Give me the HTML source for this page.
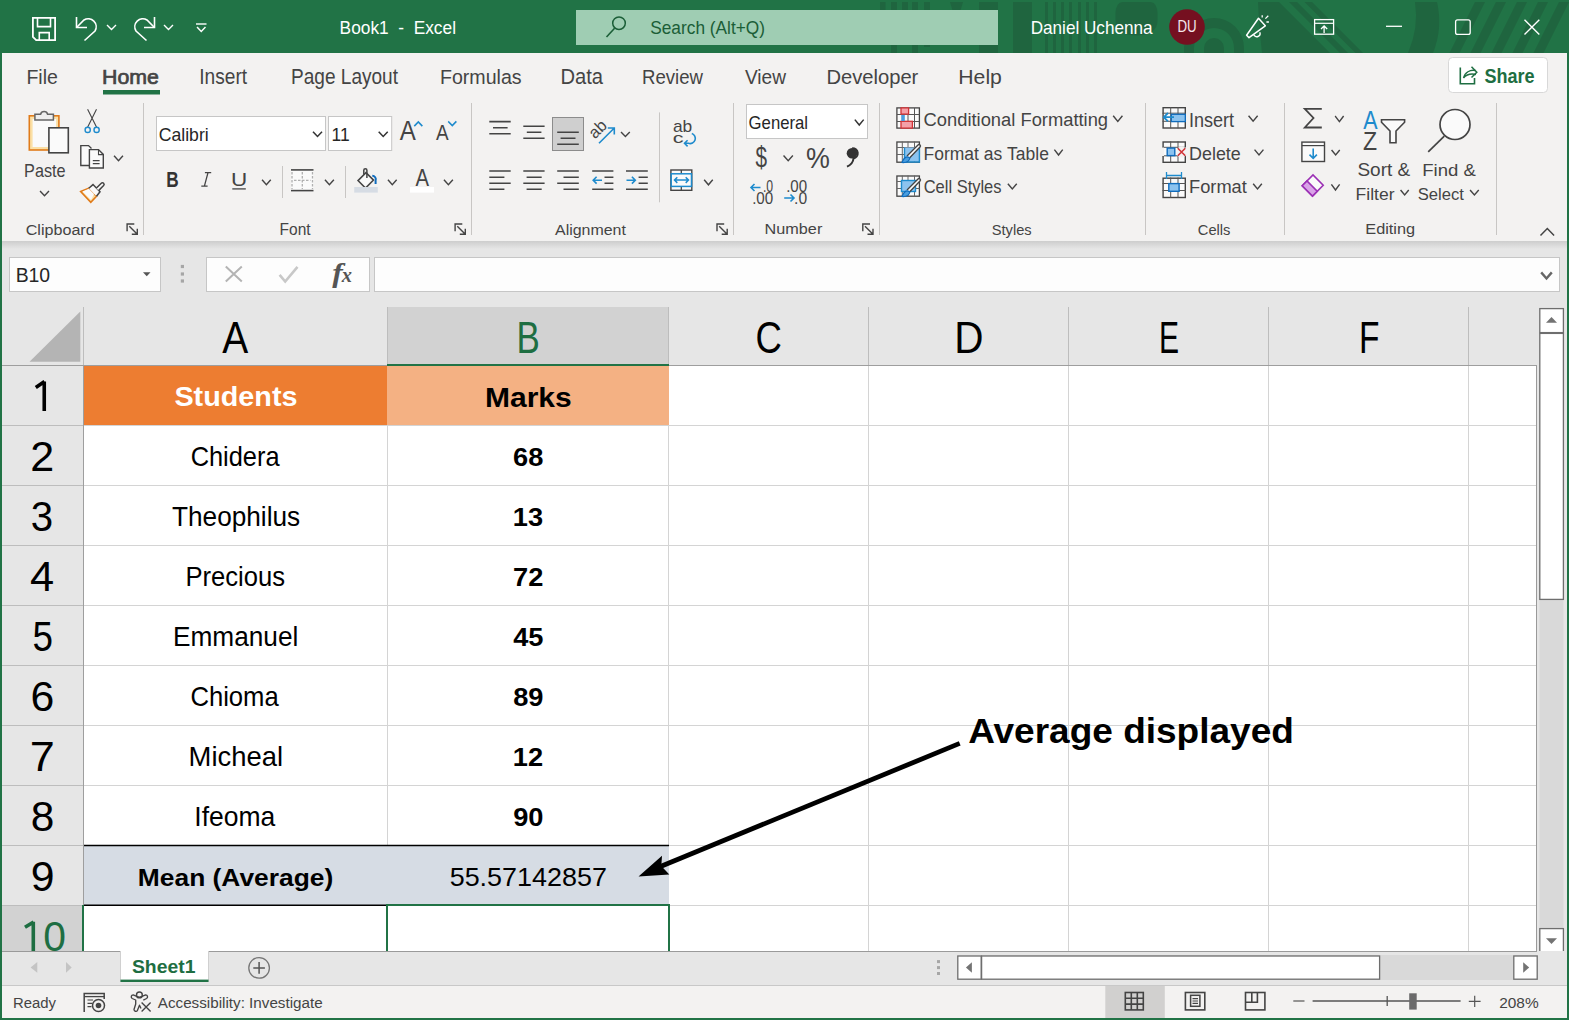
<!DOCTYPE html>
<html><head><meta charset="utf-8"><title>Book1 - Excel</title>
<style>*{margin:0;padding:0}html,body{width:1569px;height:1020px;overflow:hidden;background:#217346}svg{display:block}</style>
</head><body><svg width="1569" height="1020" viewBox="0 0 1569 1020" font-family="'Liberation Sans', sans-serif">
<rect x="0" y="0" width="1569" height="1020" fill="#217346" />
<g fill="#1f653f">
<rect x="880" y="2" width="5.5" height="10"/>
<rect x="891" y="2" width="6" height="51"/>
<rect x="902" y="2" width="6" height="10"/>
<rect x="912" y="2" width="6" height="51"/>
<rect x="924" y="2" width="6" height="45"/>
<rect x="979" y="2" width="19" height="51"/>
<rect x="1013" y="2" width="19" height="51"/>
<path d="M950 2H963L960 12H953Z"/>
<rect x="1045" y="2" width="3" height="51"/>
<rect x="1053" y="2" width="3" height="51"/>
<rect x="1061" y="2" width="3" height="51"/>
<rect x="1069" y="2" width="3" height="51"/>
<rect x="1078" y="2" width="3" height="51"/>
<rect x="1086" y="2" width="3" height="51"/>
<rect x="1094" y="2" width="3" height="51"/>
<path d="M1122 2H1151Q1157 3 1157.5 13V20Q1157.5 35.5 1136.5 35.5Q1115.5 35.5 1115.5 20V13Q1116 3 1122 2Z"/>
<path fill-rule="evenodd" d="M1184 48A30 30 0 0 1 1244 48L1244 53H1234V48A20 20 0 0 0 1194 48V53H1184Z"/>
<path d="M1204 53V48A10 10 0 0 1 1224 48V53Z"/>
<path d="M1258 2H1279L1330 53H1262Q1259 25 1258 2Z"/>
<path d="M1289 2H1297L1348 53H1340Z"/><path d="M1304.5 2H1312L1363 53H1355.5Z"/>
<path d="M1415 2H1437Q1443 28 1433 53H1408Q1419 28 1415 2Z"/>
<path d="M1475 2H1485L1459.5 53H1449.5Z"/>
<path d="M1496 2H1506L1480.5 53H1470.5Z"/>
<path d="M1517 2H1527L1501.5 53H1491.5Z"/>
<path d="M1538 2H1548L1522.5 53H1512.5Z"/>
<path d="M1559 2H1569L1543.5 53H1533.5Z"/>
</g>
<path d="M32.9 17.9H55.1V40.1H36.2L32.9 36.8Z" stroke="#ffffff" fill="none" stroke-width="1.8" />
<path d="M37.5 18V26.6H50.5V18" stroke="#ffffff" fill="none" stroke-width="1.6" />
<path d="M39.3 40V32.6H49.2V40" stroke="#ffffff" fill="none" stroke-width="1.6" />
<path d="M76.5 17V27.5H87" stroke="#ffffff" fill="none" stroke-width="1.6" />
<path d="M76.8 27.2L84 20A8 8 0 0 1 95 31L84.5 40.5" stroke="#ffffff" fill="none" stroke-width="1.6" />
<path d="M107.5 25.5L111.5 29.5L115.5 25.5" stroke="#ffffff" fill="none" stroke-width="1.4" stroke-linecap="square"/>
<path d="M154.5 17V27.5H144" stroke="#ffffff" fill="none" stroke-width="1.6" />
<path d="M154.2 27.2L147 20A8 8 0 0 0 136 31L146.5 40.5" stroke="#ffffff" fill="none" stroke-width="1.6" />
<path d="M164.5 25.5L168.5 29.5L172.5 25.5" stroke="#ffffff" fill="none" stroke-width="1.4" stroke-linecap="square"/>
<line x1="196" y1="24" x2="206.5" y2="24" stroke="#ffffff" stroke-width="1.4" />
<path d="M197.5 27.5L201.25 31.5L205 27.5" stroke="#ffffff" fill="none" stroke-width="1.4" stroke-linecap="square"/>
<text transform="translate(339.61 33.80) scale(0.9662 1)" font-family='"Liberation Sans"' font-size="17.93" font-weight="normal" font-style="normal" fill="#ffffff" >Book1&#160;&#160;-&#160;&#160;Excel</text>
<rect x="576" y="10" width="422" height="35" fill="#9fcdb3" />
<circle cx="619" cy="23.2" r="6.3" fill="none" stroke="#1b5e37" stroke-width="1.5"/>
<line x1="606.5" y1="37" x2="614.6" y2="28.2" stroke="#1b5e37" stroke-width="1.6" />
<text transform="translate(650.22 33.80) scale(0.9794 1)" font-family='"Liberation Sans"' font-size="17.66" font-weight="normal" font-style="normal" fill="#1b5e37" >Search&#160;(Alt+Q)</text>
<text transform="translate(1030.63 34.00) scale(0.9786 1)" font-family='"Liberation Sans"' font-size="17.52" font-weight="normal" font-style="normal" fill="#ffffff" >Daniel&#160;Uchenna</text>
<circle cx="1187" cy="27" r="17.8" fill="#751020"/>
<text transform="translate(1177.44 32.30) scale(0.7984 1)" font-family='"Liberation Sans"' font-size="16.67" font-weight="normal" font-style="normal" fill="#f4e6ea" >DU</text>
<path d="M1258.5 18.3L1246.6 35.3L1249 37.6L1265.3 25.8Z" stroke="#ffffff" fill="none" stroke-width="1.5" stroke-linejoin="round"/>
<path d="M1253.6 34.6A3.3 3.3 0 0 0 1259.8 32.2" stroke="#ffffff" fill="none" stroke-width="1.4" />
<path d="M1262.2 15.2V17.6M1265.4 18.6L1268.3 15.8M1266.4 22H1268.9" stroke="#ffffff" fill="none" stroke-width="1.3" />
<rect x="1314.6" y="19.6" width="19" height="14.6" fill="none" stroke="#fff" stroke-width="1.3"/>
<line x1="1314.6" y1="23.3" x2="1333.6" y2="23.3" stroke="#ffffff" stroke-width="1.2" />
<path d="M1324.1 33V26.2M1321 29L1324.1 26L1327.2 29" stroke="#ffffff" fill="none" stroke-width="1.3" />
<line x1="1386" y1="26.3" x2="1402" y2="26.3" stroke="#ffffff" stroke-width="1.3" />
<rect x="1455.6" y="19.8" width="14.6" height="14.6" rx="2" fill="none" stroke="#fff" stroke-width="1.3"/>
<path d="M1524.5 19.8L1539.3 34.6M1539.3 19.8L1524.5 34.6" stroke="#ffffff" fill="none" stroke-width="1.4" />
<rect x="2" y="53" width="1565" height="188" fill="#f3f2f1" />
<text transform="translate(26.44 84.30) scale(0.9631 1)" font-family='"Liberation Sans"' font-size="20.28" font-weight="normal" font-style="normal" fill="#444" >File</text>
<text transform="translate(199.28 84.30) scale(0.8978 1)" font-family='"Liberation Sans"' font-size="21.30" font-weight="normal" font-style="normal" fill="#444" >Insert</text>
<text transform="translate(290.97 84.30) scale(0.8955 1)" font-family='"Liberation Sans"' font-size="21.30" font-weight="normal" font-style="normal" fill="#444" >Page&#160;Layout</text>
<text transform="translate(439.93 84.30) scale(0.9669 1)" font-family='"Liberation Sans"' font-size="20.28" font-weight="normal" font-style="normal" fill="#444" >Formulas</text>
<text transform="translate(560.38 84.30) scale(0.9480 1)" font-family='"Liberation Sans"' font-size="21.30" font-weight="normal" font-style="normal" fill="#444" >Data</text>
<text transform="translate(642.01 84.30) scale(0.9170 1)" font-family='"Liberation Sans"' font-size="20.28" font-weight="normal" font-style="normal" fill="#444" >Review</text>
<text transform="translate(744.90 84.30) scale(0.9427 1)" font-family='"Liberation Sans"' font-size="20.28" font-weight="normal" font-style="normal" fill="#444" >View</text>
<text transform="translate(826.39 84.30) scale(0.9952 1)" font-family='"Liberation Sans"' font-size="20.28" font-weight="normal" font-style="normal" fill="#444" >Developer</text>
<text transform="translate(958.30 84.30) scale(1.0450 1)" font-family='"Liberation Sans"' font-size="20.28" font-weight="normal" font-style="normal" fill="#444" >Help</text>
<text transform="translate(102.09 84.10) scale(1.0369 1)" font-family='"Liberation Sans"' font-size="20.58" font-weight="normal" font-style="normal" fill="#444" stroke="#444" stroke-width="0.7">Home</text>
<rect x="103" y="90" width="57" height="4.5" fill="#217346" />
<rect x="1448.5" y="57.5" width="99" height="35" rx="4" fill="#fff" stroke="#d8d8d8"/>
<text transform="translate(1484.46 83.30) scale(0.8841 1)" font-family='"Liberation Sans"' font-size="20.41" font-weight="bold" font-style="normal" fill="#1e6e42" >Share</text>
<path d="M1460.3 67.5V83.8H1474.5V78" stroke="#1e6e42" fill="none" stroke-width="1.6" />
<path d="M1463.5 78A10 10 0 0 1 1475.5 70.5M1463.5 78A11 8 0 0 1 1476 74.5" stroke="#1e6e42" fill="none" stroke-width="1.4" />
<path d="M1471.5 66.8L1476.8 72.3L1471.5 77.5" stroke="#1e6e42" fill="none" stroke-width="1.5" />
<line x1="143.5" y1="103" x2="143.5" y2="235" stroke="#c8c6c4" stroke-width="1" />
<line x1="471.5" y1="103" x2="471.5" y2="235" stroke="#c8c6c4" stroke-width="1" />
<line x1="733.5" y1="103" x2="733.5" y2="235" stroke="#c8c6c4" stroke-width="1" />
<line x1="879.5" y1="103" x2="879.5" y2="235" stroke="#c8c6c4" stroke-width="1" />
<line x1="1145.5" y1="103" x2="1145.5" y2="235" stroke="#c8c6c4" stroke-width="1" />
<line x1="1284.5" y1="103" x2="1284.5" y2="235" stroke="#c8c6c4" stroke-width="1" />
<line x1="1496.5" y1="103" x2="1496.5" y2="235" stroke="#c8c6c4" stroke-width="1" />
<rect x="29.3" y="115.8" width="29.6" height="34.2" fill="#fbe0a6" stroke="#e07b1a" stroke-width="1.6"/>
<rect x="32.6" y="119" width="23.5" height="28" fill="#fafafa" />
<path d="M34.9 120V114.3H40.6A3.6 3.6 0 0 1 47.6 114.3H53.4V120Z" stroke="#666" fill="#eeeeee" stroke-width="1.5" />
<rect x="48.9" y="127.8" width="19.4" height="25" fill="#fafafa" stroke="#444" stroke-width="1.6"/>
<text transform="translate(24.10 176.60) scale(0.9045 1)" font-family='"Liberation Sans"' font-size="17.97" font-weight="normal" font-style="normal" fill="#444" >Paste</text>
<path d="M40.5 191.5L44.5 195.8L48.5 191.5" stroke="#444" fill="none" stroke-width="1.4" stroke-linecap="square"/>
<path d="M87.6 109.3L96.6 127.3M96.5 109.3L87.6 127.3" stroke="#444" fill="none" stroke-width="1.1" />
<circle cx="87.7" cy="129.9" r="2.6" fill="none" stroke="#1e8bcd" stroke-width="1.4"/><circle cx="96.6" cy="129.9" r="2.6" fill="none" stroke="#1e8bcd" stroke-width="1.4"/>
<path d="M89.5 165.5H80.8V145.6H88.5L91.5 148.6" stroke="#444" fill="#fafafa" stroke-width="1.4" />
<path d="M89.4 168V149.6H98.5L103.3 154.4V168Z" stroke="#444" fill="#fafafa" stroke-width="1.4" />
<path d="M92.8 160.6H99.6M92.8 163.6H99.6" stroke="#444" fill="none" stroke-width="1.1" />
<path d="M98.5 149.8V154.6H103.3" stroke="#444" fill="none" stroke-width="1.1" />
<path d="M114.5 156.2L118.5 160.8L122.5 156.2" stroke="#444" fill="none" stroke-width="1.4" stroke-linecap="square"/>
<path d="M80.7 191.5L88.8 188.3L96.5 196.3L90.8 202.3Z" stroke="#e07b1a" fill="#fbe0a6" stroke-width="1.6" />
<path d="M82.5 191.5L88.8 188.7L94 194L91 200Z" stroke="none" fill="#fafafa" stroke-width="1" />
<path d="M88.8 188.3L93 184.6L100 191.8L96.5 196.3" stroke="#444" fill="#fafafa" stroke-width="1.5" />
<path d="M96.2 188.3L101.3 183.2A1.6 1.6 0 0 1 103.6 185.5L98.6 190.6" stroke="#444" fill="#fafafa" stroke-width="1.5" />
<text transform="translate(25.69 234.50) scale(1.1357 1)" font-family='"Liberation Sans"' font-size="14.21" font-weight="normal" font-style="normal" fill="#444" >Clipboard</text>
<path d="M127.1 231.2V224.0H134.3" stroke="#444" fill="none" stroke-width="1.4" />
<path d="M129.3 226.2L137.3 234.2M131.8 234.2H137.3V228.7" stroke="#444" fill="none" stroke-width="1.4" />
<rect x="156.5" y="116.5" width="169" height="34" fill="#fff" stroke="#c6c6c6"/>
<text transform="translate(158.72 141.00) scale(0.9690 1)" font-family='"Liberation Sans"' font-size="18.21" font-weight="normal" font-style="normal" fill="#262626" >Calibri</text>
<path d="M313.5 132.3L317.5 136.5L321.5 132.3" stroke="#333" fill="none" stroke-width="1.5" stroke-linecap="square"/>
<rect x="328.5" y="116.5" width="63.2" height="34" fill="#fff" stroke="#c6c6c6"/>
<text transform="translate(331.49 141.00) scale(0.9426 1)" font-family='"Liberation Sans"' font-size="18.55" font-weight="normal" font-style="normal" fill="#262626" >11</text>
<path d="M379.2 132.3L383.2 136.5L387.2 132.3" stroke="#333" fill="none" stroke-width="1.5" stroke-linecap="square"/>
<text transform="translate(399.70 139.50) scale(0.8514 1)" font-family='"Liberation Sans"' font-size="28.26" font-weight="normal" font-style="normal" fill="#444" >A</text>
<path d="M414.8 125.6L418.3 122L421.8 125.6" stroke="#1e8bcd" fill="none" stroke-width="1.6" stroke-linecap="square"/>
<text transform="translate(436.00 139.50) scale(0.8658 1)" font-family='"Liberation Sans"' font-size="21.88" font-weight="normal" font-style="normal" fill="#444" >A</text>
<path d="M448.8 122L452.3 125.6L455.8 122" stroke="#1e8bcd" fill="none" stroke-width="1.6" stroke-linecap="square"/>
<text transform="translate(166.28 186.80) scale(0.8025 1)" font-family='"Liberation Sans"' font-size="21.45" font-weight="bold" font-style="normal" fill="#333" >B</text>
<path d="M204.9 172.7H211.2M201.3 186.2H207.6M208 172.7L204.4 186.2" stroke="#444" fill="none" stroke-width="1.3" />
<text transform="translate(230.92 185.60) scale(1.1650 1)" font-family='"Liberation Sans"' font-size="19.28" font-weight="normal" font-style="normal" fill="#444" >U</text>
<line x1="232.3" y1="188.9" x2="245.8" y2="188.9" stroke="#444" stroke-width="1.3" />
<path d="M262.5 180.3L266.4 184.8L270.3 180.3" stroke="#444" fill="none" stroke-width="1.4" stroke-linecap="square"/>
<line x1="282.5" y1="166" x2="282.5" y2="198" stroke="#c8c6c4" stroke-width="1" />
<rect x="291" y="169" width="22.5" height="22.5" fill="#fafafa" />
<line x1="291" y1="169.9" x2="313.5" y2="169.9" stroke="#444" stroke-width="1.6" />
<line x1="291" y1="190.6" x2="313.5" y2="190.6" stroke="#444" stroke-width="1.6" />
<path d="M292 172V189M302.3 172V189M312.5 172V189M294 180.3H310.5" stroke="#b0b0b0" fill="none" stroke-width="1.3" stroke-dasharray="2.5 1.5"/>
<path d="M325.4 180.3L329.4 184.8L333.4 180.3" stroke="#444" fill="none" stroke-width="1.4" stroke-linecap="square"/>
<line x1="345.5" y1="166" x2="345.5" y2="198" stroke="#c8c6c4" stroke-width="1" />
<path d="M358 180.6L366 172.6L373.5 180.1L365.5 188.1Z" stroke="#444" fill="#fafafa" stroke-width="1.5" />
<path d="M363.8 174.8V170.3A1.5 1.5 0 0 1 366.9 170.3V178" stroke="#444" fill="none" stroke-width="1.5" />
<path d="M372.3 175.8A3.5 3.5 0 0 1 375.6 180.5V184" stroke="#0f6cbd" fill="none" stroke-width="2" />
<rect x="354.2" y="187" width="23.6" height="5.6" fill="#d6dce4" />
<path d="M388.4 180.3L392.29999999999995 184.8L396.2 180.3" stroke="#444" fill="none" stroke-width="1.4" stroke-linecap="square"/>
<text transform="translate(415.40 185.60) scale(0.8338 1)" font-family='"Liberation Sans"' font-size="24.35" font-weight="normal" font-style="normal" fill="#444" >A</text>
<rect x="410" y="187" width="24" height="5.6" fill="#ffffff" />
<path d="M444.4 180.3L448.4 184.8L452.4 180.3" stroke="#444" fill="none" stroke-width="1.4" stroke-linecap="square"/>
<text transform="translate(279.56 235.00) scale(0.9728 1)" font-family='"Liberation Sans"' font-size="15.94" font-weight="normal" font-style="normal" fill="#444" >Font</text>
<path d="M455.1 231.2V224.0H462.3" stroke="#444" fill="none" stroke-width="1.4" />
<path d="M457.3 226.2L465.3 234.2M459.8 234.2H465.3V228.7" stroke="#444" fill="none" stroke-width="1.4" />
<path d="M489.3 121.6H510.7M493 127.7H507.6M489.3 133.7H510.7" stroke="#444" fill="none" stroke-width="1.6" />
<path d="M523.3 126.2H544.6M526.8 132.2H541.4M523.3 138.3H544.6" stroke="#444" fill="none" stroke-width="1.6" />
<rect x="552.5" y="117.5" width="31" height="33" fill="#cfcfcf" stroke="#8c8c8c"/>
<path d="M557.2 132.2H578.8M560.6 138.3H575.5M557.2 144.2H578.8" stroke="#444" fill="none" stroke-width="1.6" />
<path d="M489.3 171H510.7M489.3 177.3H504.4M489.3 183.2H510.7M489.3 189.3H504.4" stroke="#444" fill="none" stroke-width="1.6" />
<path d="M523.3 171H544.6M526.6 177.3H541.7M523.3 183.2H544.6M526.6 189.3H541.7" stroke="#444" fill="none" stroke-width="1.6" />
<path d="M557.2 171H578.8M563.5 177.3H578.8M557.2 183.2H578.8M563.5 189.3H578.8" stroke="#444" fill="none" stroke-width="1.6" />
<path d="M592.2 171H613.4M604.5 177.3H613.4M604.5 183.2H613.4M592.2 189.3H613.4" stroke="#444" fill="none" stroke-width="1.6" />
<path d="M626 171H647.8M638.6 177.3H647.8M638.6 183.2H647.8M626 189.3H647.8" stroke="#444" fill="none" stroke-width="1.6" />
<path d="M602 180.2H593.2M596.6 176.8L593.2 180.2L596.6 183.6" stroke="#1e8bcd" fill="none" stroke-width="1.6" />
<path d="M626.5 180.2H635.3M631.9 176.8L635.3 180.2L631.9 183.6" stroke="#1e8bcd" fill="none" stroke-width="1.6" />
<text transform="translate(595 139.5) rotate(-45)" font-family="'Liberation Sans'" font-size="16.5" fill="#444">ab</text>
<path d="M599 143.3L614.3 128M607.8 128H614.3V134.5" stroke="#1e8bcd" fill="none" stroke-width="1.6" />
<path d="M621.5 132.5L625.4 136.5L629.3 132.5" stroke="#444" fill="none" stroke-width="1.4" stroke-linecap="square"/>
<line x1="659.5" y1="112.4" x2="659.5" y2="202.3" stroke="#c8c6c4" stroke-width="1" />
<text transform="translate(672.90 132.30) scale(1.1052 1)" font-family='"Liberation Sans"' font-size="15.72" font-weight="normal" font-style="normal" fill="#444" >ab</text>
<text transform="translate(672.74 143.00) scale(1.4586 1)" font-family='"Liberation Sans"' font-size="14.81" font-weight="normal" font-style="normal" fill="#444" >c</text>
<path d="M691.8 133.5A4.5 4.5 0 0 1 688.5 143.3H684.5M687.6 140.2L684.5 143.3L687.6 146.4" stroke="#1e8bcd" fill="none" stroke-width="1.6" />
<rect x="670.9" y="170" width="20.9" height="20.3" fill="#fafafa" stroke="#444" stroke-width="1.4"/>
<line x1="681.3" y1="170" x2="681.3" y2="190.3" stroke="#444" stroke-width="1.3" />
<rect x="671.2" y="173.8" width="20.3" height="12.6" fill="#fafafa" stroke="#1e8bcd" stroke-width="1.5"/>
<path d="M674.5 180.1H688.5M677.3 177.3L674.5 180.1L677.3 182.9M685.7 177.3L688.5 180.1L685.7 182.9" stroke="#1e8bcd" fill="none" stroke-width="1.5" />
<path d="M704.6 180.3L708.45 184.8L712.3 180.3" stroke="#444" fill="none" stroke-width="1.4" stroke-linecap="square"/>
<text transform="translate(555.00 234.70) scale(1.0322 1)" font-family='"Liberation Sans"' font-size="15.45" font-weight="normal" font-style="normal" fill="#444" >Alignment</text>
<path d="M717.0 231.2V224.0H724.2" stroke="#444" fill="none" stroke-width="1.4" />
<path d="M719.2 226.2L727.2 234.2M721.7 234.2H727.2V228.7" stroke="#444" fill="none" stroke-width="1.4" />
<rect x="746.5" y="104.5" width="121" height="34" fill="#fff" stroke="#c6c6c6"/>
<text transform="translate(748.56 129.10) scale(0.9127 1)" font-family='"Liberation Sans"' font-size="18.34" font-weight="normal" font-style="normal" fill="#262626" >General</text>
<path d="M855.3 120.2L859.25 125L863.2 120.2" stroke="#333" fill="none" stroke-width="1.5" stroke-linecap="square"/>
<text transform="translate(755.39 166.59) scale(0.7215 1)" font-family='"Liberation Sans"' font-size="28.77" font-weight="normal" font-style="normal" fill="#444" >$</text>
<path d="M784 156L788.2 160.6L792.4 156" stroke="#444" fill="none" stroke-width="1.4" stroke-linecap="square"/>
<text transform="translate(806.06 167.50) scale(0.8965 1)" font-family='"Liberation Sans"' font-size="29.93" font-weight="normal" font-style="normal" fill="#444" >%</text>
<path d="M852.2 148.2A5.2 5.2 0 0 1 853.5 158.5Q853 164 847 166.6" stroke="#333" fill="none" stroke-width="2" />
<circle cx="852" cy="153.2" r="5.3" fill="#333"/>
<text transform="translate(762.90 192.00) scale(0.7798 1)" font-family='"Liberation Sans"' font-size="15.71" font-weight="normal" font-style="normal" fill="#444" >.0</text>
<text transform="translate(752.13 203.60) scale(0.9572 1)" font-family='"Liberation Sans"' font-size="15.86" font-weight="normal" font-style="normal" fill="#444" >.00</text>
<path d="M760.5 187.5H751M754.5 184L751 187.5L754.5 191" stroke="#1e8bcd" fill="none" stroke-width="1.6" />
<text transform="translate(786.14 192.00) scale(0.9608 1)" font-family='"Liberation Sans"' font-size="15.71" font-weight="normal" font-style="normal" fill="#444" >.00</text>
<text transform="translate(794.09 203.60) scale(0.9859 1)" font-family='"Liberation Sans"' font-size="15.86" font-weight="normal" font-style="normal" fill="#444" >.0</text>
<path d="M784.2 198H794M790.5 194.5L794 198L790.5 201.5" stroke="#1e8bcd" fill="none" stroke-width="1.6" />
<text transform="translate(764.60 234.20) scale(1.1776 1)" font-family='"Liberation Sans"' font-size="13.79" font-weight="normal" font-style="normal" fill="#444" >Number</text>
<path d="M862.8 231.2V224.0H870" stroke="#444" fill="none" stroke-width="1.4" />
<path d="M865 226.2L873 234.2M867.5 234.2H873V228.7" stroke="#444" fill="none" stroke-width="1.4" />
<rect x="896.9" y="107.9" width="22.5" height="20.2" fill="#fafafa" stroke="#444" stroke-width="1.3"/>
<path d="M902.3 108V128M908 108V128M914.5 108V128M897 114.5H919.4M897 121.5H919.4" stroke="#555" fill="none" stroke-width="1" />
<rect x="901" y="107.9" width="7.6" height="6.2" fill="#f4a0a8" stroke="#d13438" stroke-width="1.3"/>
<rect x="901" y="121.3" width="11.4" height="6.8" fill="#f4a0a8" stroke="#d13438" stroke-width="1.3"/>
<rect x="901.3" y="115" width="3.5" height="6" fill="#4a9fe0" />
<text transform="translate(923.58 125.90) scale(1.0079 1)" font-family='"Liberation Sans"' font-size="18.21" font-weight="normal" font-style="normal" fill="#444" >Conditional&#160;Formatting</text>
<path d="M1113.6 116.3L1117.8 121.5L1122 116.3" stroke="#444" fill="none" stroke-width="1.4" stroke-linecap="square"/>
<rect x="896.9" y="142.0" width="22.5" height="20.2" fill="#fafafa" stroke="#444" stroke-width="1.3"/>
<path d="M902.3 141.5V162.5M908 141.5V162.5M914.5 141.5V162.5M897 147.5H919.4M897 154.5H919.4" stroke="#666" fill="none" stroke-width="1" />
<rect x="904" y="147.5" width="15" height="14" fill="#8cc3ef" stroke="#1e8bcd" stroke-width="0"/>
<path d="M904.5 147.5V162.0H919.4V147.5" stroke="#1e8bcd" fill="none" stroke-width="1.4" />
<path d="M907 156.0L918 145.0A1.4 1.4 0 0 1 920 147.0L909.5 158.0" stroke="#444" fill="#fafafa" stroke-width="1.4" />
<path d="M902 162.5Q905 154.5 909.8 158.0Q909 163.0 902 162.5Z" stroke="#0f6cbd" fill="#4a9fe0" stroke-width="1.2" />
<text transform="translate(923.60 159.50) scale(0.9601 1)" font-family='"Liberation Sans"' font-size="18.21" font-weight="normal" font-style="normal" fill="#444" >Format&#160;as&#160;Table</text>
<path d="M1054.8 150.2L1058.55 155L1062.3 150.2" stroke="#444" fill="none" stroke-width="1.4" stroke-linecap="square"/>
<rect x="896.9" y="176.0" width="22.5" height="20.2" fill="#fafafa" stroke="#444" stroke-width="1.3"/>
<path d="M902.3 175.5V196.5M908 175.5V196.5M914.5 175.5V196.5M897 181.5H919.4M897 188.5H919.4" stroke="#666" fill="none" stroke-width="1" />
<rect x="901.5" y="180.5" width="14" height="11" fill="#8cc3ef" stroke="#1e8bcd" stroke-width="1.4"/>
<path d="M907 190.0L918 179.0A1.4 1.4 0 0 1 920 181.0L909.5 192.0" stroke="#444" fill="#fafafa" stroke-width="1.4" />
<path d="M902 196.5Q905 188.5 909.8 192.0Q909 197.0 902 196.5Z" stroke="#0f6cbd" fill="#4a9fe0" stroke-width="1.2" />
<text transform="translate(923.68 193.30) scale(0.9055 1)" font-family='"Liberation Sans"' font-size="18.21" font-weight="normal" font-style="normal" fill="#444" >Cell&#160;Styles</text>
<path d="M1008.3 184.3L1012.3 189L1016.3 184.3" stroke="#444" fill="none" stroke-width="1.4" stroke-linecap="square"/>
<text transform="translate(991.74 234.70) scale(0.9496 1)" font-family='"Liberation Sans"' font-size="15.45" font-weight="normal" font-style="normal" fill="#444" >Styles</text>
<rect x="1163.1" y="107.7" width="22.2" height="20.3" fill="#fafafa" stroke="#444" stroke-width="1.4"/>
<path d="M1170.7 107V128.3M1178 107V128.3M1162.5 113.2H1186M1162.5 121.3H1186" stroke="#555" fill="none" stroke-width="1" />
<rect x="1171.3" y="114.3" width="14" height="7.3" fill="#8cc3ef" stroke="#0f6cbd" stroke-width="1.3"/>
<path d="M1174 117.2H1163.8M1168 113L1163.8 117.2L1168 121.4" stroke="#1e8bcd" fill="none" stroke-width="1.8" />
<text transform="translate(1188.88 126.60) scale(0.9292 1)" font-family='"Liberation Sans"' font-size="19.42" font-weight="normal" font-style="normal" fill="#444" >Insert</text>
<path d="M1249 116.3L1253.1 121.2L1257.2 116.3" stroke="#444" fill="none" stroke-width="1.4" stroke-linecap="square"/>
<rect x="1163.1" y="142.0" width="22.2" height="20.3" fill="#fafafa" stroke="#444" stroke-width="1.4"/>
<path d="M1170.7 141.3V162.60000000000002M1178 141.3V162.60000000000002M1162.5 147.3H1186M1162.5 155.8H1186" stroke="#555" fill="none" stroke-width="1" />
<rect x="1162" y="147.5" width="2" height="8.5" fill="#f3f2f1" />
<rect x="1184.5" y="147.5" width="2" height="8.5" fill="#f3f2f1" />
<rect x="1167.2" y="148.1" width="7.6" height="7.5" fill="#8cc3ef" stroke="#0f6cbd" stroke-width="1.4"/>
<circle cx="1181.5" cy="152" r="5.5" fill="#f3f2f1"/>
<path d="M1177.8 148.2L1185.3 155.8M1185.3 148.2L1177.8 155.8" stroke="#d13438" fill="none" stroke-width="1.6" />
<text transform="translate(1189.07 159.50) scale(0.9833 1)" font-family='"Liberation Sans"' font-size="18.21" font-weight="normal" font-style="normal" fill="#444" >Delete</text>
<path d="M1255 150.2L1259.0 155L1263 150.2" stroke="#444" fill="none" stroke-width="1.4" stroke-linecap="square"/>
<rect x="1163.1" y="178.2" width="22.2" height="19.3" fill="#fafafa" stroke="#444" stroke-width="1.4"/>
<path d="M1170.7 177.5V197.8M1178 177.5V197.8M1162.5 183.5H1186M1162.5 190.5H1186" stroke="#555" fill="none" stroke-width="1" />
<rect x="1168.8" y="183.6" width="10.3" height="7.7" fill="#8cc3ef" stroke="#0f6cbd" stroke-width="1.4"/>
<path d="M1166.5 175.5H1181.5M1166.5 172V179M1181.5 172V179" stroke="#1e8bcd" fill="none" stroke-width="1.3" />
<text transform="translate(1189.04 193.30) scale(0.9538 1)" font-family='"Liberation Sans"' font-size="19.13" font-weight="normal" font-style="normal" fill="#444" >Format</text>
<path d="M1253.6 184.3L1257.5 189L1261.4 184.3" stroke="#444" fill="none" stroke-width="1.4" stroke-linecap="square"/>
<text transform="translate(1197.76 234.70) scale(0.9528 1)" font-family='"Liberation Sans"' font-size="15.45" font-weight="normal" font-style="normal" fill="#444" >Cells</text>
<path d="M1321.8 108.8H1304.8L1313.5 118L1304.8 127.5H1321.8" stroke="#444" fill="none" stroke-width="1.8" stroke-linejoin="miter"/>
<path d="M1335.6 116.6L1339.4 121.6L1343.2 116.6" stroke="#444" fill="none" stroke-width="1.4" stroke-linecap="square"/>
<rect x="1301.9" y="142.1" width="22.6" height="19.4" fill="#fafafa" stroke="#444" stroke-width="1.4"/>
<line x1="1301.9" y1="145.6" x2="1324.5" y2="145.6" stroke="#444" stroke-width="1.2" />
<path d="M1313.2 148.5V158.3M1309.5 154.6L1313.2 158.3L1316.9 154.6" stroke="#1e8bcd" fill="none" stroke-width="1.6" />
<path d="M1332 150.5L1335.65 155L1339.3 150.5" stroke="#444" fill="none" stroke-width="1.4" stroke-linecap="square"/>
<path d="M1302.2 185.7L1313 175L1323.2 185.3L1312.5 196Z" stroke="#9b30b5" fill="#fafafa" stroke-width="1.6" />
<path d="M1302.2 185.7L1307 180.9L1317.2 191.3L1312.5 196Z" stroke="#9b30b5" fill="#d9a3e8" stroke-width="1.6" />
<path d="M1331.8 185L1335.5 190L1339.2 185" stroke="#444" fill="none" stroke-width="1.4" stroke-linecap="square"/>
<text transform="translate(1363.30 128.50) scale(0.8336 1)" font-family='"Liberation Sans"' font-size="25.80" font-weight="normal" font-style="normal" fill="#1e8bcd" >A</text>
<text transform="translate(1363.11 149.90) scale(0.8659 1)" font-family='"Liberation Sans"' font-size="26.67" font-weight="normal" font-style="normal" fill="#444" >Z</text>
<path d="M1381.5 119.8H1404.6V122.2L1396 131V142.8H1390V131L1381.5 122.2Z" stroke="#444" fill="#fafafa" stroke-width="1.6" />
<text transform="translate(1357.44 176.00) scale(1.0643 1)" font-family='"Liberation Sans"' font-size="17.86" font-weight="normal" font-style="normal" fill="#444" >Sort&#160;&amp;</text>
<text transform="translate(1355.60 200.00) scale(1.0153 1)" font-family='"Liberation Sans"' font-size="17.24" font-weight="normal" font-style="normal" fill="#444" >Filter</text>
<path d="M1401 190.5L1404.65 195L1408.3 190.5" stroke="#444" fill="none" stroke-width="1.4" stroke-linecap="square"/>
<circle cx="1455" cy="124.5" r="15" fill="#fafafa" stroke="#444" stroke-width="1.7"/>
<line x1="1428.2" y1="151.8" x2="1444.3" y2="136.2" stroke="#444" stroke-width="1.7" />
<text transform="translate(1422.21 176.00) scale(1.0770 1)" font-family='"Liberation Sans"' font-size="17.24" font-weight="normal" font-style="normal" fill="#444" >Find&#160;&amp;</text>
<text transform="translate(1417.75 200.00) scale(0.9642 1)" font-family='"Liberation Sans"' font-size="17.24" font-weight="normal" font-style="normal" fill="#444" >Select</text>
<path d="M1470.5 190.5L1474.4 195L1478.3 190.5" stroke="#444" fill="none" stroke-width="1.4" stroke-linecap="square"/>
<text transform="translate(1365.29 234.00) scale(1.1271 1)" font-family='"Liberation Sans"' font-size="14.48" font-weight="normal" font-style="normal" fill="#444" >Editing</text>
<path d="M1540.5 235.5L1547.3 228.5L1554.1 235.5" stroke="#444" fill="none" stroke-width="1.5" />
<defs><linearGradient id="sh" x1="0" y1="0" x2="0" y2="1"><stop offset="0" stop-color="#cdcdcd"/><stop offset="1" stop-color="#e6e6e6"/></linearGradient></defs>
<rect x="2" y="241" width="1565" height="66" fill="#e6e6e6" />
<rect x="2" y="241" width="1565" height="8" fill="url(#sh)" />
<rect x="9.5" y="257.5" width="151" height="34" fill="#fdfdfd" stroke="#c6c6c6"/>
<text transform="translate(15.65 281.80) scale(0.9985 1)" font-family='"Liberation Sans"' font-size="19.43" font-weight="normal" font-style="normal" fill="#262626" >B10</text>
<path d="M143 272.3H150.5L146.75 276.3Z" stroke="none" fill="#555" stroke-width="1" />
<rect x="180.8" y="264.9" width="3.2" height="3.2" fill="#a6a6a6" />
<rect x="180.8" y="272.4" width="3.2" height="3.2" fill="#a6a6a6" />
<rect x="180.8" y="279.4" width="3.2" height="3.2" fill="#a6a6a6" />
<rect x="206.5" y="257.5" width="163" height="34" fill="#fdfdfd" stroke="#c6c6c6"/>
<path d="M225.8 266.5L241.8 281.5M241.8 266.5L225.8 281.5" stroke="#b4b4b4" fill="none" stroke-width="2" />
<path d="M279.6 274.8L285.2 281.5L297.5 266.8" stroke="#c8c8c8" fill="none" stroke-width="2.6" />
<text transform="translate(332.30 282.00) scale(1.1802 1)" font-family='"Liberation Serif"' font-size="26.95" font-weight="bold" font-style="italic" fill="#555" >f</text>
<text transform="translate(341.81 281.50) scale(0.9388 1)" font-family='"Liberation Serif"' font-size="21.74" font-weight="bold" font-style="italic" fill="#555" >x</text>
<rect x="374.5" y="257.5" width="1185" height="34" fill="#fdfdfd" stroke="#c6c6c6"/>
<path d="M1542 273.3L1546.5 278.5L1551 273.3" stroke="#666" fill="none" stroke-width="2.4" stroke-linecap="square"/>
<rect x="2" y="307" width="1535" height="644" fill="#ffffff" />
<rect x="2" y="307" width="1535" height="58" fill="#e6e6e6" />
<rect x="2" y="307" width="81" height="644" fill="#e6e6e6" />
<rect x="388" y="307" width="280" height="58" fill="#d2d2d2" />
<rect x="2" y="905" width="81" height="46" fill="#d2d2d2" />
<rect x="84" y="366" width="303" height="59" fill="#ed7d31" />
<rect x="388" y="366" width="280" height="59" fill="#f4b183" />
<rect x="84" y="846" width="584" height="59" fill="#d6dce4" />
<line x1="84" y1="425.5" x2="1537" y2="425.5" stroke="#d4d4d4" stroke-width="1" />
<line x1="84" y1="485.5" x2="1537" y2="485.5" stroke="#d4d4d4" stroke-width="1" />
<line x1="84" y1="545.5" x2="1537" y2="545.5" stroke="#d4d4d4" stroke-width="1" />
<line x1="84" y1="605.5" x2="1537" y2="605.5" stroke="#d4d4d4" stroke-width="1" />
<line x1="84" y1="665.5" x2="1537" y2="665.5" stroke="#d4d4d4" stroke-width="1" />
<line x1="84" y1="725.5" x2="1537" y2="725.5" stroke="#d4d4d4" stroke-width="1" />
<line x1="84" y1="785.5" x2="1537" y2="785.5" stroke="#d4d4d4" stroke-width="1" />
<line x1="84" y1="845.5" x2="1537" y2="845.5" stroke="#d4d4d4" stroke-width="1" />
<line x1="84" y1="905.5" x2="1537" y2="905.5" stroke="#d4d4d4" stroke-width="1" />
<line x1="387.5" y1="366" x2="387.5" y2="951" stroke="#d4d4d4" stroke-width="1" />
<line x1="668.5" y1="366" x2="668.5" y2="951" stroke="#d4d4d4" stroke-width="1" />
<line x1="868.5" y1="366" x2="868.5" y2="951" stroke="#d4d4d4" stroke-width="1" />
<line x1="1068.5" y1="366" x2="1068.5" y2="951" stroke="#d4d4d4" stroke-width="1" />
<line x1="1268.5" y1="366" x2="1268.5" y2="951" stroke="#d4d4d4" stroke-width="1" />
<line x1="1468.5" y1="366" x2="1468.5" y2="951" stroke="#d4d4d4" stroke-width="1" />
<rect x="84" y="366" width="303" height="59" fill="#ed7d31" />
<rect x="387" y="366" width="282" height="59" fill="#f4b183" />
<rect x="84" y="846" width="585" height="59" fill="#d6dce4" />
<line x1="387.5" y1="307" x2="387.5" y2="365" stroke="#bdbdbd" stroke-width="1" />
<line x1="668.5" y1="307" x2="668.5" y2="365" stroke="#bdbdbd" stroke-width="1" />
<line x1="868.5" y1="307" x2="868.5" y2="365" stroke="#bdbdbd" stroke-width="1" />
<line x1="1068.5" y1="307" x2="1068.5" y2="365" stroke="#bdbdbd" stroke-width="1" />
<line x1="1268.5" y1="307" x2="1268.5" y2="365" stroke="#bdbdbd" stroke-width="1" />
<line x1="1468.5" y1="307" x2="1468.5" y2="365" stroke="#bdbdbd" stroke-width="1" />
<line x1="83.5" y1="307" x2="83.5" y2="365" stroke="#bdbdbd" stroke-width="1" />
<line x1="2" y1="425.5" x2="83" y2="425.5" stroke="#bdbdbd" stroke-width="1" />
<line x1="2" y1="485.5" x2="83" y2="485.5" stroke="#bdbdbd" stroke-width="1" />
<line x1="2" y1="545.5" x2="83" y2="545.5" stroke="#bdbdbd" stroke-width="1" />
<line x1="2" y1="605.5" x2="83" y2="605.5" stroke="#bdbdbd" stroke-width="1" />
<line x1="2" y1="665.5" x2="83" y2="665.5" stroke="#bdbdbd" stroke-width="1" />
<line x1="2" y1="725.5" x2="83" y2="725.5" stroke="#bdbdbd" stroke-width="1" />
<line x1="2" y1="785.5" x2="83" y2="785.5" stroke="#bdbdbd" stroke-width="1" />
<line x1="2" y1="845.5" x2="83" y2="845.5" stroke="#bdbdbd" stroke-width="1" />
<line x1="2" y1="905.5" x2="83" y2="905.5" stroke="#bdbdbd" stroke-width="1" />
<line x1="2" y1="365.5" x2="1537" y2="365.5" stroke="#9e9e9e" stroke-width="1" />
<line x1="83.5" y1="366" x2="83.5" y2="951" stroke="#9e9e9e" stroke-width="1" />
<path d="M29.5 361.8H80.3V311.5Z" stroke="none" fill="#b4b4b4" stroke-width="1" />
<rect x="387" y="364" width="282" height="2" fill="#217346" />
<rect x="82" y="905" width="2" height="46" fill="#217346" />
<line x1="84" y1="845.5" x2="669" y2="845.5" stroke="#000" stroke-width="1.4" />
<line x1="84" y1="905.2" x2="669" y2="905.2" stroke="#000" stroke-width="1.4" />
<rect x="387" y="905" width="282" height="50" fill="#fff" stroke="#217346" stroke-width="2"/>
<line x1="1536.5" y1="366" x2="1536.5" y2="951" stroke="#9a9a9a" stroke-width="1" />
<text transform="translate(222.30 353.00) scale(0.8958 1)" font-family="'Liberation Sans'" font-size="43.48" font-weight="normal" fill="#000">A</text>
<text transform="translate(516.40 353.00) scale(0.8039 1)" font-family="'Liberation Sans'" font-size="43.48" font-weight="normal" fill="#1e6e42">B</text>
<text transform="translate(755.47 353.00) scale(0.8403 1)" font-family="'Liberation Sans'" font-size="43.48" font-weight="normal" fill="#000">C</text>
<text transform="translate(954.16 353.00) scale(0.9316 1)" font-family="'Liberation Sans'" font-size="43.48" font-weight="normal" fill="#000">D</text>
<text transform="translate(1158.89 353.00) scale(0.6921 1)" font-family="'Liberation Sans'" font-size="43.48" font-weight="normal" fill="#000">E</text>
<text transform="translate(1358.92 353.00) scale(0.7698 1)" font-family="'Liberation Sans'" font-size="43.48" font-weight="normal" fill="#000">F</text>
<text transform="translate(30.25 471.00) scale(0.9952 1)" font-family="'Liberation Sans'" font-size="43.29" font-weight="normal" fill="#000">2</text>
<text transform="translate(30.79 531.00) scale(0.9290 1)" font-family="'Liberation Sans'" font-size="43.29" font-weight="normal" fill="#000">3</text>
<text transform="translate(29.93 591.00) scale(1.0019 1)" font-family="'Liberation Sans'" font-size="43.29" font-weight="normal" fill="#000">4</text>
<text transform="translate(32.53 651.00) scale(0.8511 1)" font-family="'Liberation Sans'" font-size="43.29" font-weight="normal" fill="#000">5</text>
<text transform="translate(30.46 711.00) scale(0.9887 1)" font-family="'Liberation Sans'" font-size="43.29" font-weight="normal" fill="#000">6</text>
<text transform="translate(29.75 771.00) scale(1.0409 1)" font-family="'Liberation Sans'" font-size="43.29" font-weight="normal" fill="#000">7</text>
<text transform="translate(30.69 831.00) scale(0.9782 1)" font-family="'Liberation Sans'" font-size="43.29" font-weight="normal" fill="#000">8</text>
<text transform="translate(30.67 891.00) scale(0.9887 1)" font-family="'Liberation Sans'" font-size="43.29" font-weight="normal" fill="#000">9</text>
<path d="M44.25 410.9V381.5M44.5 381.6L35.8 387.6" stroke="#000" fill="none" stroke-width="3.6" />
<path d="M33.3 951V921.8M33.6 921.9L25 927.3" stroke="#1e6e42" fill="none" stroke-width="3.6" />
<text transform="translate(43.17 951.30) scale(0.9433 1)" font-family="'Liberation Sans'" font-size="43.29" font-weight="normal" fill="#1e6e42">0</text>
<text transform="translate(174.39 406.40) scale(1.0136 1)" font-family="'Liberation Sans'" font-size="28.41" font-weight="bold" fill="#ffffff">Students</text>
<text transform="translate(484.95 406.70) scale(1.0565 1)" font-family="'Liberation Sans'" font-size="28.41" font-weight="bold" fill="#000">Marks</text>
<text transform="translate(190.63 466.00) scale(0.9221 1)" font-family="'Liberation Sans'" font-size="27.54" font-weight="normal" fill="#000">Chidera</text>
<text transform="translate(513.00 466.00) scale(1.0600 1)" font-family="'Liberation Sans'" font-size="25.71" font-weight="bold" fill="#000">68</text>
<text transform="translate(171.98 526.00) scale(0.9516 1)" font-family="'Liberation Sans'" font-size="27.54" font-weight="normal" fill="#000">Theophilus</text>
<text transform="translate(512.73 526.00) scale(1.0600 1)" font-family="'Liberation Sans'" font-size="25.71" font-weight="bold" fill="#000">13</text>
<text transform="translate(185.45 586.00) scale(0.9303 1)" font-family="'Liberation Sans'" font-size="27.54" font-weight="normal" fill="#000">Precious</text>
<text transform="translate(513.07 586.00) scale(1.0600 1)" font-family="'Liberation Sans'" font-size="25.71" font-weight="bold" fill="#000">72</text>
<text transform="translate(172.90 646.00) scale(0.9535 1)" font-family="'Liberation Sans'" font-size="27.54" font-weight="normal" fill="#000">Emmanuel</text>
<text transform="translate(513.21 646.00) scale(1.0600 1)" font-family="'Liberation Sans'" font-size="25.71" font-weight="bold" fill="#000">45</text>
<text transform="translate(190.42 706.00) scale(0.9306 1)" font-family="'Liberation Sans'" font-size="27.54" font-weight="normal" fill="#000">Chioma</text>
<text transform="translate(513.14 706.00) scale(1.0600 1)" font-family="'Liberation Sans'" font-size="25.71" font-weight="bold" fill="#000">89</text>
<text transform="translate(188.61 766.00) scale(0.9959 1)" font-family="'Liberation Sans'" font-size="27.54" font-weight="normal" fill="#000">Micheal</text>
<text transform="translate(512.80 766.00) scale(1.0600 1)" font-family="'Liberation Sans'" font-size="25.71" font-weight="bold" fill="#000">12</text>
<text transform="translate(194.31 826.00) scale(0.9627 1)" font-family="'Liberation Sans'" font-size="27.54" font-weight="normal" fill="#000">Ifeoma</text>
<text transform="translate(513.14 826.00) scale(1.0600 1)" font-family="'Liberation Sans'" font-size="25.71" font-weight="bold" fill="#000">90</text>
<text transform="translate(137.83 885.80) scale(1.0748 1)" font-family="'Liberation Sans'" font-size="24.55" font-weight="bold" fill="#000">Mean&#160;(Average)</text>
<text transform="translate(449.67 885.90) scale(1.0418 1)" font-family="'Liberation Sans'" font-size="25.86" font-weight="normal" fill="#000">55.57142857</text>
<text transform="translate(968.17 742.90) scale(1.0527 1)" font-family='"Liberation Sans"' font-size="35.17" font-weight="bold" font-style="normal" fill="#000" >Average&#160;displayed</text>
<path d="M959.7 743.4L652 870" stroke="#000" fill="none" stroke-width="4.8" />
<path d="M638.5 876.5L662 855.8L661.3 866L669.3 874.5Z" stroke="none" fill="#000" stroke-width="1" />
<rect x="1537" y="307" width="30" height="644" fill="#e6e6e6" />
<rect x="1539.5" y="333" width="24" height="595" fill="#d9d9d9" />
<rect x="1539.8" y="308.6" width="23.6" height="24" fill="#fff" stroke="#6e6e6e" stroke-width="1.3"/>
<rect x="1539.8" y="333.4" width="23.6" height="266" fill="#fff" stroke="#6e6e6e" stroke-width="1.3"/>
<path d="M1546 322.8H1557L1551.5 317Z" stroke="none" fill="#737373" stroke-width="1" />
<rect x="1539.8" y="928.6" width="23.6" height="23.4" fill="#fff" stroke="#6e6e6e" stroke-width="1.3"/>
<path d="M1546 938.2H1557L1551.5 944Z" stroke="none" fill="#737373" stroke-width="1" />
<rect x="2" y="951" width="1565" height="34" fill="#e6e6e6" />
<line x1="2" y1="951.5" x2="1537" y2="951.5" stroke="#9a9a9a" stroke-width="1" />
<line x1="2" y1="985.5" x2="1567" y2="985.5" stroke="#c8c8c8" stroke-width="1" />
<rect x="2" y="986" width="1565" height="32" fill="#f3f2f1" />
<path d="M30.6 967.4L37.3 962V972.8Z" stroke="none" fill="#c4c4c4" stroke-width="1" />
<path d="M71.7 967.4L66 962V972.8Z" stroke="none" fill="#c4c4c4" stroke-width="1" />
<rect x="120.5" y="951" width="88" height="31" fill="#ffffff" />
<line x1="120.5" y1="951" x2="120.5" y2="982" stroke="#d0d0d0" stroke-width="1" />
<line x1="208.5" y1="951" x2="208.5" y2="982" stroke="#d0d0d0" stroke-width="1" />
<rect x="120.5" y="979.6" width="88" height="2.4" fill="#217346" />
<text transform="translate(131.92 972.70) scale(1.0485 1)" font-family='"Liberation Sans"' font-size="18.48" font-weight="bold" font-style="normal" fill="#1e6e42" >Sheet1</text>
<circle cx="259.1" cy="967.9" r="10.3" fill="none" stroke="#767676" stroke-width="1.3"/>
<path d="M253.3 967.9H264.9M259.1 962.1V973.7" stroke="#555" fill="none" stroke-width="1.5" />
<rect x="937" y="960.1" width="3" height="3" fill="#a6a6a6" />
<rect x="937" y="966.1" width="3" height="3" fill="#a6a6a6" />
<rect x="937" y="972.0" width="3" height="3" fill="#a6a6a6" />
<rect x="982" y="955" width="556" height="25" fill="#d9d9d9" />
<rect x="957.8" y="956" width="23.4" height="23.2" fill="#fff" stroke="#6e6e6e" stroke-width="1.3"/>
<path d="M965.9 967.5L971.9 962.2V972.8Z" stroke="none" fill="#737373" stroke-width="1" />
<rect x="981.6" y="956" width="398" height="23.2" fill="#fff" stroke="#6e6e6e" stroke-width="1.3"/>
<rect x="1513.8" y="956" width="23.4" height="23.2" fill="#fff" stroke="#6e6e6e" stroke-width="1.3"/>
<path d="M1529.2 967.5L1523.2 962.2V972.8Z" stroke="none" fill="#737373" stroke-width="1" />
<text transform="translate(13.01 1008.00) scale(1.0271 1)" font-family='"Liberation Sans"' font-size="14.48" font-weight="normal" font-style="normal" fill="#444" >Ready</text>
<path d="M84.2 1012V993.5H104.2V999" stroke="#444" fill="none" stroke-width="1.5" />
<line x1="84.2" y1="996.6" x2="104.2" y2="996.6" stroke="#444" stroke-width="1.3" />
<path d="M87.5 1000H93M87.5 1003.3H92M87.5 1006.6H91.5" stroke="#444" fill="none" stroke-width="1.2" />
<circle cx="98.5" cy="1005.5" r="6" fill="#f3f2f1" stroke="#444" stroke-width="1.5"/><circle cx="98.5" cy="1005.5" r="2.8" fill="#444"/>
<circle cx="139.4" cy="994.9" r="2.9" fill="none" stroke="#444" stroke-width="1.4"/>
<path d="M143.3 1000.1L146.6 998.5A2 2 0 0 0 145.6 994.8L141.5 996.6Q139.4 997.6 137.3 996.6L133.2 994.8A2 2 0 0 0 132.2 998.5L135.7 1000V1004L134 1009.5A1.9 1.9 0 0 0 137.4 1010.6L139.5 1005.2L141 1008.5" stroke="#444" fill="none" stroke-width="1.35" stroke-linejoin="round"/>
<path d="M141.6 1002.6L150.6 1011.5M150.6 1002.6L141.6 1011.5" stroke="#444" fill="none" stroke-width="1.35" />
<text transform="translate(157.80 1007.70) scale(1.0036 1)" font-family='"Liberation Sans"' font-size="15.17" font-weight="normal" font-style="normal" fill="#444" >Accessibility:&#160;Investigate</text>
<rect x="1105.3" y="986" width="59.5" height="32" fill="#d1d0cf" />
<rect x="1125.3" y="992.5" width="18" height="17.4" fill="none" stroke="#444" stroke-width="1.6"/>
<path d="M1131.3 992.5V1010M1137.3 992.5V1010M1125.3 998.3H1143.3M1125.3 1004.1H1143.3" stroke="#444" fill="none" stroke-width="1.6" />
<rect x="1185.4" y="992.5" width="19.4" height="17.4" fill="none" stroke="#444" stroke-width="1.6"/>
<rect x="1190.6" y="995.3" width="9.3" height="11" fill="none" stroke="#444" stroke-width="1.5"/>
<path d="M1192.5 998.6H1198M1192.5 1001H1198M1192.5 1003.4H1198" stroke="#444" fill="none" stroke-width="1.1" />
<rect x="1245.5" y="992.5" width="19.4" height="17.4" fill="none" stroke="#444" stroke-width="1.6"/>
<path d="M1251.8 992.5V1002.2H1257.4V992.5M1245.5 1002.2H1251.8" stroke="#444" fill="none" stroke-width="1.6" />
<line x1="1293.3" y1="1001" x2="1304.5" y2="1001" stroke="#555" stroke-width="1.2" />
<line x1="1312.6" y1="1001" x2="1460.6" y2="1001" stroke="#555" stroke-width="1.3" />
<line x1="1387.2" y1="996" x2="1387.2" y2="1006" stroke="#555" stroke-width="1.3" />
<rect x="1409.2" y="993.3" width="7.5" height="16.3" fill="#6b6b6b" />
<path d="M1468.8 1001.4H1480.6M1474.7 995.8V1007" stroke="#555" fill="none" stroke-width="1.2" />
<text transform="translate(1499.23 1007.60) scale(1.0192 1)" font-family='"Liberation Sans"' font-size="15.14" font-weight="normal" font-style="normal" fill="#444" >208%</text>
</svg></body></html>
